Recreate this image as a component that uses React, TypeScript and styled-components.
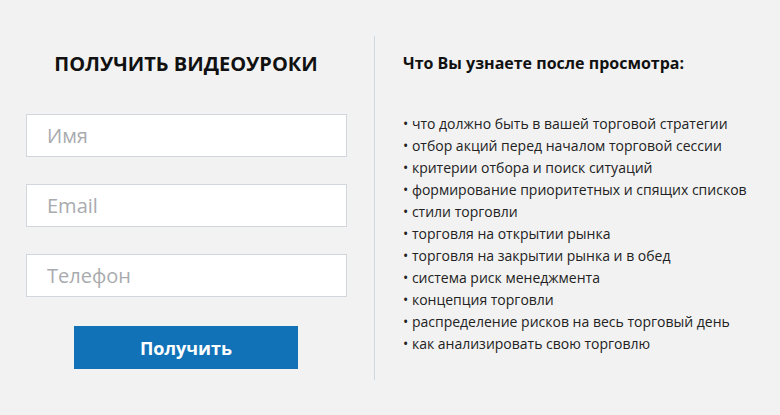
import styled, { createGlobalStyle } from "styled-components";

const GlobalStyle = createGlobalStyle`
  html, body {
    margin: 0;
    padding: 0;
    background: #f2f2f2;
  }
  body {
    font-family: "Open Sans", "Noto Sans", sans-serif;
  }
  * {
    box-sizing: border-box;
  }
`;

const topics = [
  "что должно быть в вашей торговой стратегии",
  "отбор акций перед началом торговой сессии",
  "критерии отбора и поиск ситуаций",
  "формирование приоритетных и спящих списков",
  "стили торговли",
  "торговля на открытии рынка",
  "торговля на закрытии рынка и в обед",
  "система риск менеджмента",
  "концепция торговли",
  "распределение рисков на весь торговый день",
  "как анализировать свою торговлю",
];

const App = () => {
  return (
    <>
      <GlobalStyle />
      <Page>
        <FormColumn>
          <FormTitle>ПОЛУЧИТЬ ВИДЕОУРОКИ</FormTitle>
          <Fields>
            <Field type="text" placeholder="Имя" />
            <Field type="email" placeholder="Email" />
            <Field type="tel" placeholder="Телефон" />
          </Fields>
          <SubmitButton type="button">Получить</SubmitButton>
        </FormColumn>
        <Divider />
        <InfoColumn>
          <InfoTitle>Что Вы узнаете после просмотра:</InfoTitle>
          <TopicList>
            {topics.map((t) => (
              <TopicItem key={t}>{t}</TopicItem>
            ))}
          </TopicList>
        </InfoColumn>
      </Page>
    </>
  );
};

export default App;

const Page = styled.div`
  display: flex;
  width: 780px;
  height: 415px;
  padding-top: 36px;
  background: #f2f2f2;
`;

const FormColumn = styled.div`
  width: 374px;
  padding: 14px 28px 0 26px;
  display: flex;
  flex-direction: column;
`;

const FormTitle = styled.h2`
  margin: 0;
  font-size: 20px;
  line-height: 28px;
  font-weight: 700;
  color: #111;
  text-align: center;
`;

const Fields = styled.div`
  display: flex;
  flex-direction: column;
  gap: 27px;
  margin-top: 36px;
`;

const Field = styled.input`
  display: block;
  width: 321px;
  height: 43px;
  padding: 0 0 0 20px;
  border: 1px solid #d2d7de;
  border-radius: 0;
  background: #fff;
  font-family: "Open Sans", sans-serif;
  font-size: 20px;
  color: #333;
  outline: none;

  &::placeholder {
    color: #a9abae;
  }
`;

const SubmitButton = styled.button`
  display: block;
  width: 224px;
  height: 43px;
  margin: 29px auto 0;
  border: none;
  border-radius: 0;
  background: #1272b8;
  color: #fff;
  font-family: "Open Sans", sans-serif;
  font-size: 18px;
  font-weight: 700;
  cursor: pointer;
`;

const Divider = styled.div`
  width: 1px;
  height: 344px;
  background: #cfd8e0;
`;

const InfoColumn = styled.div`
  flex: 1;
  padding: 17px 0 0 28px;
  white-space: nowrap;
`;

const InfoTitle = styled.h3`
  margin: 0;
  font-size: 16px;
  line-height: 21px;
  font-weight: 700;
  color: #111;
`;

const TopicList = styled.ul`
  list-style: none;
  margin: 39px 0 0;
  padding: 0;
`;

const TopicItem = styled.li`
  font-size: 14px;
  line-height: 22px;
  color: #222;

  &::before {
    content: "• ";
  }
`;
